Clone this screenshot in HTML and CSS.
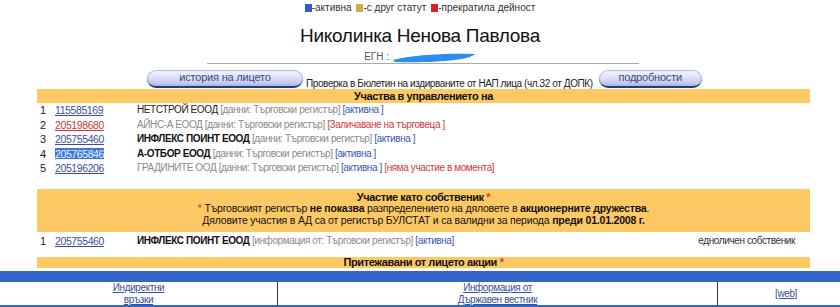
FILE: index.html
```html
<!DOCTYPE html>
<html lang="bg">
<head>
    <meta charset="UTF-8">
    <title>Николинка Ненова Павлова</title>
    <link rel="stylesheet" href="styles.css">
</head>
<body>
    <div class="legend">
        <span class="sq sq-blue"></span>-активна
        <span class="sq sq-yellow"></span>-с друг статут
        <span class="sq sq-red"></span>-прекратила дейност
    </div>

    <div class="person">
        <h1>Николинка Ненова Павлова</h1>
        <div class="egn">ЕГН :
            <svg class="blur" width="84" height="12" viewBox="0 0 84 12">
                <path d="M1 9 C 20 4, 52 2, 83 3 C 78 9, 44 12, 3 11 Z" fill="#2d8cf0"/>
            </svg>
        </div>
        <div class="rule"></div>
    </div>

    <div class="actions">
        <a class="pill pill-wide" href="#">история на лицето</a>
        <span class="nap">Проверка в Бюлетин на издирваните от НАП лица (чл.32 от ДОПК)</span>
        <a class="pill" href="#">подробности</a>
    </div>

    <div class="main">
        <div class="bar">Участва в управлението на</div>
        <div class="rows">
            <div class="row">
                <span class="num">1</span>
                <span class="eik"><a href="#">115585169</a></span>
                <span class="firm">НЕТСТРОЙ ЕООД <span class="src">[данни: Търговски регистър]</span> <span class="st-blue">[активна ]</span></span>
            </div>
            <div class="row">
                <span class="num">2</span>
                <span class="eik"><a class="eik-red" href="#">205198680</a></span>
                <span class="firm off">АЙНС-А ЕООД <span class="src">[данни: Търговски регистър]</span> <span class="st-red">[Заличаване на търговеца ]</span></span>
            </div>
            <div class="row">
                <span class="num">3</span>
                <span class="eik"><a href="#">205755460</a></span>
                <span class="firm"><b>ИНФЛЕКС ПОИНТ ЕООД</b> <span class="src">[данни: Търговски регистър]</span> <span class="st-blue">[активна ]</span></span>
            </div>
            <div class="row">
                <span class="num">4</span>
                <span class="eik"><a class="eik-sel" href="#">205765846</a></span>
                <span class="firm"><b>А-ОТБОР ЕООД</b> <span class="src">[данни: Търговски регистър]</span> <span class="st-blue">[активна ]</span></span>
            </div>
            <div class="row">
                <span class="num">5</span>
                <span class="eik"><a href="#">205196206</a></span>
                <span class="firm off">ГРАДИНИТЕ ООД <span class="src">[данни: Търговски регистър]</span> <span class="st-blue">[активна ]</span> <span class="st-red">[няма участие в момента]</span></span>
            </div>
        </div>

        <div class="bar bar-note">
            <b>Участие като собственик <span class="star">*</span></b><br>
            <span class="star">*</span> Търговският регистър <b>не показва</b> разпределението на дяловете в <b>акционерните дружества</b>.<br>
            Дяловите участия в АД са от регистър БУЛСТАТ и са валидни за периода <b>преди 01.01.2008 г.</b>
        </div>
        <div class="row">
            <span class="num">1</span>
            <span class="eik"><a href="#">205755460</a></span>
            <span class="firm"><b>ИНФЛЕКС ПОИНТ ЕООД</b> <span class="src">[информация от: Търговски регистър]</span> <span class="st-blue">[активна]</span></span>
            <span class="role">едноличен собственик</span>
        </div>

        <div class="bar bar-last">Притежавани от лицето акции <span class="star">*</span></div>
    </div>

    <div class="footer">
        <div class="cell"><a href="#">Индиректни<br>връзки</a></div>
        <div class="cell"><a href="#">Информация от<br>Държавен вестник</a></div>
        <div class="cell cell-web"><a href="#">[web]</a></div>
    </div>
    <div class="footer-end"></div>
</body>
</html>
```

FILE: styles.css
```css
body {
    margin: 0;
    font-family: "Liberation Sans", Arial, sans-serif;
    font-size: 10px;
    letter-spacing: -0.4px;
    color: #222;
    background-color: #fff;
}

a {
    color: #3a4fa0;
}

.legend {
    text-align: center;
    font-size: 10px;
    letter-spacing: 0;
    line-height: 12px;
    padding-top: 2px;
    color: #333;
}

.sq {
    display: inline-block;
    width: 7px;
    height: 8px;
    vertical-align: -1px;
}

.sq-blue {
    background-color: #3558c9;
}

.sq-yellow {
    background-color: #d6ad45;
    margin-left: 2px;
}

.sq-red {
    background-color: #dd2020;
    margin-left: 2px;
}

.person {
    text-align: center;
}

.person h1 {
    margin: 11px 0 0;
    font-size: 19px;
    font-weight: normal;
    line-height: 22px;
    letter-spacing: -0.3px;
    color: #111;
}

.egn {
    font-size: 10px;
    letter-spacing: 0;
    line-height: 12px;
    color: #555;
    margin-top: 4px;
}

.blur {
    vertical-align: -3px;
}

.rule {
    width: 432px;
    margin-left: 207px;
    border-top: 1px solid #aaa;
}

.actions {
    display: flex;
    align-items: flex-end;
    padding-left: 147px;
    margin-top: 6px;
}

.pill {
    display: block;
    height: 16px;
    line-height: 15px;
    padding: 0 14px;
    width: 75px;
    text-align: center;
    font-size: 11px;
    letter-spacing: -0.2px;
    color: #3a4a80;
    text-decoration: none;
    border-radius: 9px;
    background: linear-gradient(#f4f5fc, #dfe3f7 45%, #c4cbee 80%, #a9b3e4);
    border-bottom: 2px solid #2a3a7e;
    box-shadow: inset 0 0 0 1px #aeb8e0;
}

.pill-wide {
    width: 128px;
}

.nap {
    margin: 0 6px -1px 3px;
    line-height: 11px;
    color: #222;
}

.main {
    margin: 1px 30px 0 37px;
}

.bar {
    background-color: #fdc964;
    text-align: center;
    font-size: 11px;
    font-weight: bold;
    letter-spacing: -0.4px;
    line-height: 14px;
    color: #111;
}

.rows {
    margin-bottom: 13px;
}

.row {
    display: flex;
    line-height: 14.6px;
}

.num {
    width: 18px;
    padding-left: 3px;
    box-sizing: border-box;
    font-size: 11px;
}

.eik {
    width: 82px;
    font-size: 10.5px;
}

.eik-red {
    color: #c83a3a;
}

.eik-sel {
    background-color: #3f78d6;
    color: #eef3ff;
}

.firm b {
    color: #111;
}

.off {
    color: #8a8a8a;
}

.src {
    color: #8a8a8a;
}

.st-blue {
    color: #3a57b8;
}

.st-red {
    color: #d23a3a;
}

.star {
    color: #e23a2a;
}

.bar-note {
    font-size: 10.5px;
    font-weight: normal;
    letter-spacing: -0.2px;
    line-height: 11.5px;
    padding: 3px 0 6px;
    margin-bottom: 2px;
}

.bar-note b:first-child {
    font-size: 11px;
    letter-spacing: -0.4px;
}

.role {
    margin-left: auto;
    padding-right: 15px;
    color: #333;
}

.bar-last {
    margin-top: 8px;
    line-height: 11px;
}

.footer {
    display: grid;
    grid-template-columns: 278px 440px 1fr;
    margin-top: 3px;
    border-top: 11px solid #3366c8;
}

.cell {
    text-align: center;
    line-height: 11.5px;
    height: 23px;
    border-right: 1px solid #333;
}

.cell-web {
    border-right: none;
    line-height: 23px;
    padding-left: 14px;
}

.footer-end {
    height: 5px;
    background-color: #3366c8;
}
```
